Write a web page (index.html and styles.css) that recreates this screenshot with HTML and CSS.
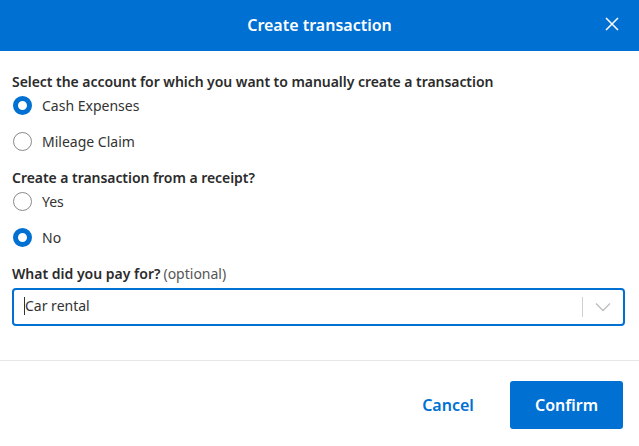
FILE: index.html
```html
<!DOCTYPE html>
<html lang="en">
<head>
<meta charset="utf-8">
<title>Create transaction</title>
<link rel="stylesheet" href="styles.css">
</head>
<body>
<div class="dialog">
  <header class="header">
    <h1 class="title">Create transaction</h1>
    <button class="close" aria-label="Close">
      <svg width="14" height="14" viewBox="0 0 14 14"><path d="M1 1 L13 13 M13 1 L1 13" stroke="#fff" stroke-width="1.5" fill="none"/></svg>
    </button>
  </header>
  <main class="body">
    <section class="group">
      <div class="label">Select the account for which you want to manually create a transaction</div>
      <div class="options">
        <label class="option"><span class="radio checked"></span><span>Cash Expenses</span></label>
        <label class="option"><span class="radio"></span><span>Mileage Claim</span></label>
      </div>
    </section>
    <section class="group">
      <div class="label">Create a transaction from a receipt?</div>
      <div class="options">
        <label class="option"><span class="radio"></span><span>Yes</span></label>
        <label class="option"><span class="radio checked"></span><span>No</span></label>
      </div>
    </section>
    <section class="field">
      <div class="label"><span class="strong">What did you pay for?</span><span class="optional">(optional)</span></div>
      <div class="select">
        <span class="cursor"></span><span class="value">Car rental</span>
        <span class="sep"></span>
        <svg class="chev" width="16" height="10" viewBox="0 0 16 10"><path d="M1 1.5 L8 8.5 L15 1.5" stroke="#bdbdbd" stroke-width="1.3" fill="none"/></svg>
      </div>
    </section>
  </main>
  <footer class="footer">
    <button class="btn cancel">Cancel</button>
    <button class="btn confirm">Confirm</button>
  </footer>
</div>
</body>
</html>
```
FILE: styles.css
```css
* { box-sizing: border-box; }
html, body { margin: 0; padding: 0; background: #fff; }
body {
  font-family: "Noto Sans", "Open Sans", sans-serif;
  font-size: 14px;
  color: #333;
  width: 639px;
  height: 446px;
  overflow: hidden;
}
.dialog { display: flex; flex-direction: column; }
.header {
  height: 51px;
  background: #0070d2;
  display: flex;
  align-items: center;
  justify-content: center;
  position: relative;
}
.title {
  margin: 0 0 2px;
  font-size: 16px;
  font-weight: 600;
  color: #fff;
}
.close {
  position: absolute;
  right: 20px;
  top: 17px;
  width: 14px;
  height: 14px;
  padding: 0;
  border: 0;
  background: none;
  display: flex;
}
.body {
  padding: 21px 14px 34px 12px;
  border-bottom: 1px solid #e6e6e6;
}
.group { margin-bottom: 17px; }
.label {
  height: 20px;
  line-height: 20px;
  margin-bottom: 4px;
  color: #2b2b2b;
}
.group .label { font-weight: 600; letter-spacing: -0.05px; margin-bottom: 3px; }
.options { display: flex; flex-direction: column; gap: 16px; }
.option {
  display: flex;
  align-items: center;
  height: 20px;
  gap: 10px;
  padding-left: 1px;
}
.radio {
  width: 19px;
  height: 19px;
  border-radius: 50%;
  border: 1px solid #8a8a8a;
  flex: none;
}
.radio.checked { border: 5px solid #0070d2; }
.strong { font-weight: 600; }
.optional { color: #555; font-weight: 400; margin-left: 3px; }
.select {
  height: 38px;
  border: 2px solid #0070d2;
  border-radius: 4px;
  display: flex;
  align-items: center;
  padding: 0 12px 3px 10px;
}
.cursor { width: 1px; height: 18px; background: #333; }
.value { flex: 1; }
.sep { width: 1px; height: 20px; background: #d0d0d0; margin-right: 12px; margin-top: 3px; }
.chev { display: block; margin-top: 3px; }
.footer {
  display: flex;
  justify-content: flex-end;
  align-items: center;
  gap: 12px;
  padding: 20px 16px 17px 0;
}
.btn {
  height: 48px;
  border: 0;
  border-radius: 3px;
  font-family: inherit;
  font-size: 16px;
  font-weight: 600;
  cursor: pointer;
}
.cancel { background: none; color: #0070d2; width: 100px; }
.confirm { background: #0070d2; color: #fff; width: 113px; }
```
